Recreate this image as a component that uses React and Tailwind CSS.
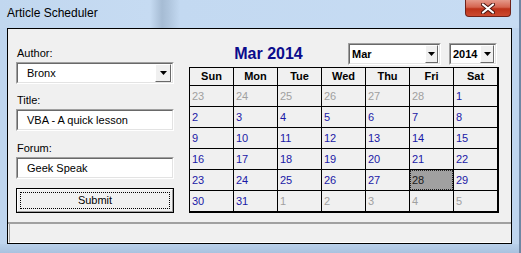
import React from 'react';

const days = [
  ...[23, 24, 25, 26, 27, 28].map((d) => ({ d, out: true })),
  ...Array.from({ length: 31 }, (_, i) => ({ d: i + 1, out: false })),
  ...[1, 2, 3, 4, 5].map((d) => ({ d, out: true })),
];

const weekDays = ['Sun', 'Mon', 'Tue', 'Wed', 'Thu', 'Fri', 'Sat'];

// Little raised button with the down arrow
const DropButton = ({ className }) => (
  <div
    className={`flex items-center justify-center border border-t-white border-l-white border-b-[#696969] border-r-[#696969] bg-[#f0f0f0] ${className}`}
  >
    <svg width="7" height="4" viewBox="0 0 7 4">
      <path d="M0 0H7L3.5 4Z" fill="#000" />
    </svg>
  </div>
);

const Sunken = ({ className, children }) => (
  <div className={`flex h-[22px] border border-t-[#a0a0a0] border-l-[#a0a0a0] border-b-white border-r-white ${className}`}>
    <div className="flex flex-1 items-center border border-t-[#696969] border-l-[#696969] border-b-[#e3e3e3] border-r-[#e3e3e3] bg-white">
      {children}
    </div>
  </div>
);

const Field = ({ label, value, combo, className }) => (
  <div className={`flex flex-col ${className}`}>
    <span className="h-[13px] pl-px leading-[13px]">{label}</span>
    <Sunken className="mt-[2px] w-[158px]">
      <span className="flex-1 pl-[9px] leading-[13px]">{value}</span>
      {combo && <DropButton className="mr-px h-[18px] w-[16px]" />}
    </Sunken>
  </div>
);

export default function App() {
  return (
    <div
      className="flex h-[253px] w-[521px] flex-col overflow-hidden border-r-2 border-r-[#6f86a3] bg-[#bfd5ee] text-[11px] text-black"
      style={{ fontFamily: '"Liberation Sans", Arial, sans-serif' }}
    >
      {/* title bar */}
      <div className="flex h-[28px] bg-[linear-gradient(90deg,#c1d7ef_0,#c6dbf2_150px,#a6bcd4_162px,#aec4dc_168px,#c3d9f1_180px,#c7dcf3_100%)]">
        <span className="pl-[7px] pt-[6px] text-[12px] leading-[14px]">Article Scheduler</span>
        <div className="ml-auto mr-[8px] flex h-[17px] w-[46px] items-center justify-center rounded-b-[4px] border border-t-0 border-[#6e221a] bg-[linear-gradient(180deg,#e5998a_0,#d5644f_45%,#bd3219_55%,#cc4a30_100%)]">
          <svg width="14" height="11" viewBox="0 0 14 11">
            <path d="M2 1.5L12 9.5M12 1.5L2 9.5" stroke="#4a140e" strokeWidth="4" strokeLinecap="round" />
            <path d="M2 1.5L12 9.5M12 1.5L2 9.5" stroke="#fff" strokeWidth="2.2" strokeLinecap="round" />
          </svg>
        </div>
      </div>

      {/* client area */}
      <div className="ml-[7px] mr-[7px] flex h-[216px] flex-col border border-black bg-[#f0f0f0]">
        <div className="flex flex-1">
          {/* form column */}
          <div className="flex flex-col pl-[8px] pt-[18px]">
            <Field label="Author:" value="Bronx" combo />
            <Field label="Title:" value="VBA - A quick lesson" className="mt-[10px]" />
            <Field label="Forum:" value="Geek Speak" className="mt-[11px]" />
            <div className="mt-[9px] h-[25px] w-[158px] border border-black">
              <div className="flex h-full items-center justify-center border border-t-white border-l-white border-b-[#a0a0a0] border-r-[#a0a0a0] p-[2px]">
                <div className="flex h-full w-full items-center justify-center border border-dotted border-black">
                  Submit
                </div>
              </div>
            </div>
          </div>

          {/* calendar column */}
          <div className="ml-[15px] flex flex-col pt-[14px]">
            <div className="flex h-[22px] items-center">
              <span className="w-[159px] text-center text-[16px] font-bold leading-[18px] text-[#0b0b8c]">Mar 2014</span>
              <Sunken className="w-[93px]">
                <span className="flex-1 pl-[2px] font-bold leading-[13px]">Mar</span>
                <DropButton className="mr-px h-[18px] w-[13px]" />
              </Sunken>
              <Sunken className="ml-[8px] w-[48px]">
                <span className="flex-1 pl-[2px] font-bold leading-[13px]">2014</span>
                <DropButton className="mr-px h-[18px] w-[14px]" />
              </Sunken>
            </div>
            <div className="mt-[2px] grid w-[310px] grid-cols-[repeat(7,43px)] grid-rows-[17px_repeat(6,20px)] gap-px bg-black pt-px pl-px pr-[2px] pb-[2px]">
              {weekDays.map((w) => (
                <div key={w} className="flex items-center justify-center bg-[#f0f0f0] font-bold leading-[13px]">
                  {w}
                </div>
              ))}
              {days.map((c, i) =>
                c.d === 28 && !c.out ? (
                  <div key={i} className="flex items-center border border-dotted border-[#202020] bg-[#a0a0a0] pl-px leading-[13px] text-[#1a1a1a]">
                    {c.d}
                  </div>
                ) : (
                  <div
                    key={i}
                    className={`flex items-center bg-[#f0f0f0] pl-[2px] leading-[13px] ${c.out ? 'text-[#a0a0a0]' : 'text-[#1a18a6]'}`}
                  >
                    {c.d}
                  </div>
                )
              )}
            </div>
          </div>
        </div>

        {/* status bar */}
        <div className="border-t-2 border-[#a0a0a0]">
          <div className="ml-px h-[19px] border-l border-b border-l-[#a0a0a0] border-b-white"></div>
        </div>
      </div>

      {/* bottom frame */}
      <div className="flex-1 bg-[linear-gradient(180deg,#b9d0ea,#a9c2df)]"></div>
    </div>
  );
}
